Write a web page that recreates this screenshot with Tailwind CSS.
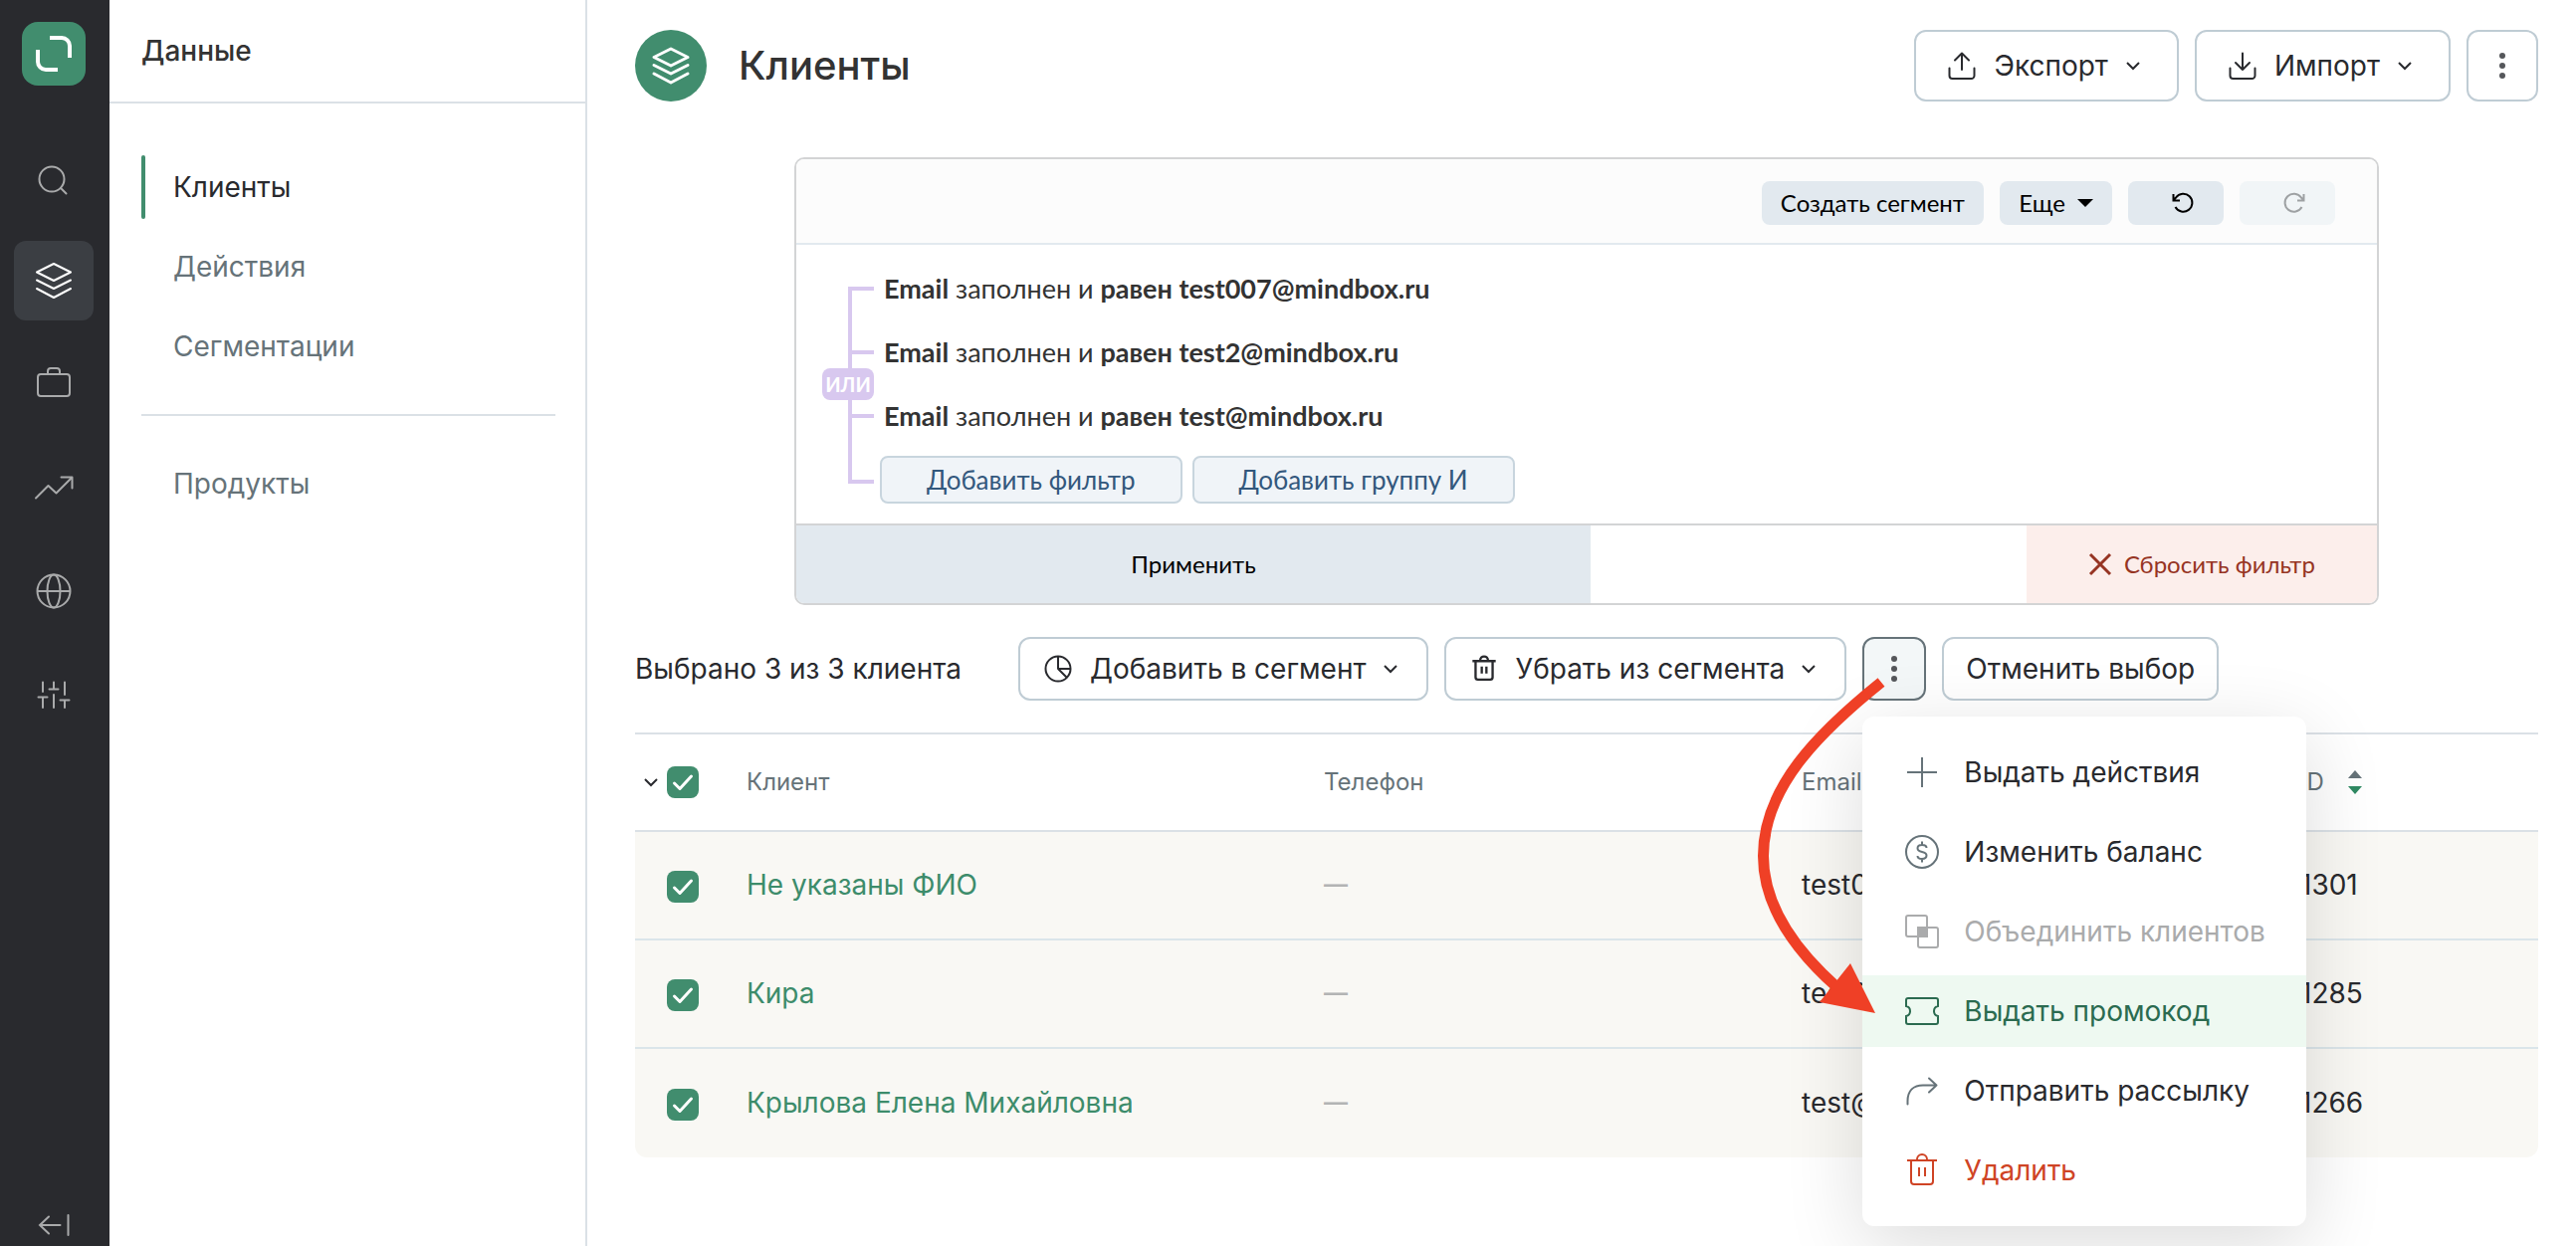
<!DOCTYPE html>
<html lang="ru">
<head>
<meta charset="utf-8">
<meta name="viewport" content="width=device-width, initial-scale=1">
<title>Клиенты</title>
<script src="https://cdn.jsdelivr.net/npm/@tailwindcss/browser@4"></script>
</head>
<body class="flex min-h-screen overflow-x-hidden bg-white font-['Inter',sans-serif] text-[28px] leading-9 text-[#292a2e]">

<!-- Shared icon shapes -->
<svg class="hidden" aria-hidden="true">
  <symbol id="layers" viewBox="0 0 40 40"><path d="M20 3 37 11.5 20 20 3 11.5zM3 19.5 20 28l17-8.5M3 28l17 9 17-9"/></symbol>
  <symbol id="chevron" viewBox="0 0 24 24"><path d="m6 9 6 6 6-6"/></symbol>
  <symbol id="trash" viewBox="0 0 36 36"><path d="M3 8h30M7 8v21a3 3 0 0 0 3 3h16a3 3 0 0 0 3-3V8M13 8V7a5 5 0 0 1 10 0v1M15 15v9M21 15v9"/></symbol>
  <symbol id="dots" viewBox="0 0 32 32"><circle cx="16" cy="6" r="3"/><circle cx="16" cy="16" r="3"/><circle cx="16" cy="26" r="3"/></symbol>
  <symbol id="check" viewBox="0 0 32 32"><path d="m7.500 17 5.500 5.500L24.500 10"/></symbol>
</svg>

<!-- Icon rail -->
<aside class="flex w-[110px] shrink-0 flex-col bg-[#292a2e] pl-[14px] pt-[22px]">
  <a href="#" aria-label="Mindbox" class="ml-2 block size-16 rounded-[16px] bg-[#418d6e]">
    <svg viewBox="0 0 64 64" class="size-16 fill-none stroke-white stroke-4"><path d="M28 16h12a8 8 0 0 1 8 8v12M16 28v12a8 8 0 0 0 8 8h12"/></svg>
  </a>
  <nav class="mt-[52px] flex flex-col gap-6 text-[#a9aaab]">
    <a href="#" aria-label="Поиск" class="flex size-20 items-center justify-center rounded-[12px]">
      <svg viewBox="0 0 40 40" class="size-10 fill-none stroke-current stroke-2" stroke-linecap="round"><circle cx="18" cy="22" r="12.500"/><path d="m27 31 5.500 5.500"/></svg>
    </a>
    <a href="#" aria-label="Данные" class="flex size-20 items-center justify-center rounded-[12px] bg-[#3b3e43] text-white">
      <svg class="size-10 fill-none stroke-current stroke-2" stroke-linejoin="round" stroke-linecap="round"><use href="#layers"/></svg>
    </a>
    <a href="#" aria-label="Кампании" class="flex size-20 items-center justify-center rounded-[12px]">
      <svg viewBox="0 0 40 40" class="size-10 fill-none stroke-current stroke-2"><rect x="4" y="10" width="32" height="22" rx="3"/><path d="M14 10V7a3 3 0 0 1 3-3h6a3 3 0 0 1 3 3v3"/></svg>
    </a>
    <a href="#" aria-label="Отчёты" class="flex size-20 items-center justify-center rounded-[12px]">
      <svg viewBox="0 0 40 40" class="size-10 fill-none stroke-current stroke-2" stroke-linecap="round" stroke-linejoin="round"><path d="M2 30.500 14.500 18l8 7.500L38 10M27.500 9.500h11v11"/></svg>
    </a>
    <a href="#" aria-label="Интеграции" class="flex size-20 items-center justify-center rounded-[12px]">
      <svg viewBox="0 0 40 40" class="size-10 fill-none stroke-current stroke-2"><circle cx="20" cy="20" r="16.500"/><ellipse cx="20" cy="20" rx="6.500" ry="16.500"/><path d="M3.500 20h33"/></svg>
    </a>
    <a href="#" aria-label="Настройки" class="flex size-20 items-center justify-center rounded-[12px]">
      <svg viewBox="0 0 40 40" class="size-10 fill-none stroke-current stroke-2" stroke-linecap="round"><path d="M9 7.500V17M4.500 22.500h9M9 22.500V33M20 7.500v7M15.500 14.500h9M20 20v13M31 7.500V20M26.500 25.500h9M31 25.500V33"/></svg>
    </a>
  </nav>
  <button type="button" aria-label="Свернуть" class="mt-auto ml-5 mb-px size-10 text-[#a9aaab]">
    <svg viewBox="0 0 40 40" class="size-10 fill-none stroke-current stroke-2" stroke-linecap="round"><path d="M6 20h20.500M15 11.500 6 20l9 8.500M34.500 10v20"/></svg>
  </button>
</aside>

<!-- Section menu -->
<aside class="w-[480px] shrink-0 border-r-2 border-[#dbe1e6]">
  <div class="flex h-[104px] items-center border-b-2 border-[#dbe1e6] pl-8">
    <h2 class="font-medium text-[#333]">Данные</h2>
  </div>
  <nav class="pl-8 pr-[30px] pt-[52px] text-[#667379]">
    <ul class="flex flex-col gap-4">
      <li><a href="#" class="relative flex h-16 items-center pl-8 text-[#292a2e]"><span class="absolute inset-y-0 left-0 w-1 rounded-full bg-[#418d6e]"></span>Клиенты</a></li>
      <li><a href="#" class="flex h-16 items-center pl-8">Действия</a></li>
      <li><a href="#" class="flex h-16 items-center pl-8">Сегментации</a></li>
    </ul>
    <hr class="my-9 border-t-2 border-[#dbe1e6]">
    <a href="#" class="flex h-16 items-center pl-8">Продукты</a>
  </nav>
</aside>

<main class="min-w-0 flex-1 pl-12 pr-[38px] pt-[30px]">
  <header class="flex items-center">
    <span class="grid size-[72px] place-items-center rounded-full bg-[#418d6e] text-white">
      <svg class="size-10 fill-none stroke-current stroke-3" stroke-linejoin="round" stroke-linecap="round"><use href="#layers"/></svg>
    </span>
    <h1 class="ml-8 text-[40px] leading-12 font-medium text-[#333]">Клиенты</h1>
    <div class="ml-auto flex gap-4">
      <button type="button" class="flex h-[72px] items-center rounded-[12px] border-2 border-[#bfccd4] px-8">
        <svg viewBox="0 0 28 28" class="size-7 fill-none stroke-current stroke-2" stroke-linecap="round" stroke-linejoin="round"><path d="M14 18V1.500M7 8.500l7-7 7 7M1.500 16.500V24a3 3 0 0 0 3 3h19a3 3 0 0 0 3-3v-7.500"/></svg>
        <span class="ml-[18px] mr-[13px]">Экспорт</span>
        <svg class="size-6 fill-none stroke-current stroke-2"><use href="#chevron"/></svg>
      </button>
      <button type="button" class="flex h-[72px] items-center rounded-[12px] border-2 border-[#bfccd4] px-8">
        <svg viewBox="0 0 28 28" class="size-7 fill-none stroke-current stroke-2" stroke-linecap="round" stroke-linejoin="round"><path d="M14 1.500V18M7 11l7 7 7-7M1.500 16.500V24a3 3 0 0 0 3 3h19a3 3 0 0 0 3-3v-7.500"/></svg>
        <span class="ml-[18px] mr-[13px]">Импорт</span>
        <svg class="size-6 fill-none stroke-current stroke-2"><use href="#chevron"/></svg>
      </button>
      <button type="button" aria-label="Ещё" class="grid size-[72px] place-items-center rounded-[12px] border-2 border-[#bfccd4]">
        <svg class="size-8 fill-[#55575b]"><use href="#dots"/></svg>
      </button>
    </div>
  </header>

  <!-- Filter builder -->
  <section class="mx-auto mt-14 max-w-[1592px] overflow-hidden rounded-[10px] border-2 border-[#d3d4d5] font-['Lato','Noto_Sans',sans-serif]">
    <div class="flex h-[86px] items-center justify-end gap-4 border-b-2 border-[#e2e9ef] bg-[#fcfcfc] pt-1 pr-[42px] text-2xl text-black">
      <button type="button" class="h-11 rounded-lg bg-[#e2e9ef] px-[19px]">Создать сегмент</button>
      <button type="button" class="flex h-11 w-[113px] items-center justify-center gap-3 rounded-lg bg-[#e2e9ef]">Еще
        <svg viewBox="0 0 16 8" class="h-2 w-4"><path d="M0 0h16L8 8z"/></svg>
      </button>
      <button type="button" aria-label="Отменить" class="flex h-11 w-24 items-center justify-center rounded-lg bg-[#e2e9ef] pl-[14px]">
        <svg viewBox="0 0 24 24" class="size-6 fill-none stroke-current stroke-2"><path d="M4.500 16a9 9 0 1 0 .6-9.500L2.500 9M2.500 3v6.500H9"/></svg>
      </button>
      <button type="button" aria-label="Повторить" disabled class="flex h-11 w-24 items-center justify-center rounded-lg bg-[#f1f5f7] pl-[14px] text-[#9ea1a3]">
        <svg viewBox="0 0 24 24" class="size-6 -scale-x-100 fill-none stroke-current stroke-2"><path d="M4.500 16a9 9 0 1 0 .6-9.500L2.500 9M2.500 3v6.500H9"/></svg>
      </button>
    </div>
    <div class="flex pb-5 pt-3">
      <div class="relative w-[84px] shrink-0">
        <svg viewBox="0 0 26 198" class="absolute left-[52px] top-[30px] h-[198px] w-[26px] fill-none stroke-[#d8c8ef] stroke-4"><path d="M26 2H2v194h24M2 66h24M2 130h24"/></svg>
        <span class="absolute left-[26px] top-28 grid h-8 w-[52px] place-items-center rounded-lg bg-[#d8c8ef] text-xl font-bold text-white">ИЛИ</span>
      </div>
      <div>
        <ul class="pl-1 text-[27px] text-[#333]">
          <li class="flex h-16 items-center"><p><b>Email</b> заполнен и <b>равен test007@mindbox.ru</b></p></li>
          <li class="flex h-16 items-center"><p><b>Email</b> заполнен и <b>равен test2@mindbox.ru</b></p></li>
          <li class="flex h-16 items-center"><p><b>Email</b> заполнен и <b>равен test@mindbox.ru</b></p></li>
        </ul>
        <div class="mt-2 flex gap-[10px] text-[26px] text-[#33587d]">
          <button type="button" class="h-12 rounded-lg border-2 border-[#c8d5de] bg-[#f0f4f8] px-[45px]">Добавить фильтр</button>
          <button type="button" class="h-12 rounded-lg border-2 border-[#c8d5de] bg-[#f0f4f8] px-[45px]">Добавить группу И</button>
        </div>
      </div>
    </div>
    <div class="flex h-20 justify-between border-t-2 border-[#d3d4d5] text-2xl">
      <button type="button" class="w-[798px] bg-[#e2e9ef] text-black">Применить</button>
      <button type="button" class="flex w-[352px] items-center justify-center gap-3 bg-[#fceeeb] text-[#963423]">
        <svg viewBox="0 0 24 24" class="size-6 fill-none stroke-current stroke-3"><path d="m2 2 20 20M22 2 2 22"/></svg>
        Сбросить фильтр
      </button>
    </div>
  </section>

  <!-- Bulk actions -->
  <div class="mt-8 flex items-center gap-4">
    <p class="mr-[41px] whitespace-nowrap">Выбрано 3 из 3 клиента</p>
    <button type="button" class="flex h-16 items-center rounded-[12px] border-2 border-[#bfccd4] px-6 whitespace-nowrap">
      <svg viewBox="0 0 28 28" class="size-7 fill-none stroke-current stroke-2" stroke-linejoin="round"><circle cx="14" cy="14" r="12.500"/><path d="M14 1.500V14h12.500M14 14l9 9"/></svg>
      <span class="ml-[18px] mr-3">Добавить в сегмент</span>
      <svg class="size-6 fill-none stroke-current stroke-2"><use href="#chevron"/></svg>
    </button>
    <button type="button" class="flex h-16 items-center rounded-[12px] border-2 border-[#bfccd4] px-6 whitespace-nowrap">
      <svg class="size-7 fill-none stroke-current stroke-3"><use href="#trash"/></svg>
      <span class="ml-[18px] mr-3">Убрать из сегмента</span>
      <svg class="size-6 fill-none stroke-current stroke-2"><use href="#chevron"/></svg>
    </button>

    <div class="relative">
      <button type="button" aria-label="Другие действия" aria-expanded="true" class="grid size-16 place-items-center rounded-[12px] border-2 border-[#667379] bg-[#f3f7f8]">
        <svg class="size-8 fill-[#55575b]"><use href="#dots"/></svg>
      </button>

      <!-- Open actions menu -->
      <ul class="absolute left-0 top-20 z-10 flex w-[446px] flex-col gap-2 rounded-[12px] bg-white py-5 whitespace-nowrap shadow-[0_20px_80px_rgba(0,0,0,0.14)]">
        <li><button type="button" class="flex h-[72px] w-full items-center gap-6 pl-[42px]">
          <svg viewBox="0 0 36 36" class="size-9 fill-none stroke-[#667379] stroke-2"><path d="M18 3v30M3 18h30"/></svg>Выдать действия</button></li>
        <li><button type="button" class="flex h-[72px] w-full items-center gap-6 pl-[42px]">
          <svg viewBox="0 0 36 36" class="size-9 fill-none stroke-[#667379] stroke-2"><circle cx="18" cy="18" r="16"/><path d="M22.500 14c0-2-2-3-4.500-3s-4.500 1-4.500 3.300S16 17.600 18 18s4.500 1.300 4.500 3.600S20.500 25 18 25s-4.500-1-4.500-3M18 7.500V11M18 25v3.500"/></svg>Изменить баланс</button></li>
        <li><button type="button" disabled class="flex h-[72px] w-full items-center gap-6 pl-[42px] text-[#aaabac]">
          <svg viewBox="0 0 36 36" class="size-9 fill-none stroke-current stroke-2"><rect x="2" y="2" width="21" height="21" rx="2"/><rect x="14" y="14" width="20" height="20" rx="2"/><path class="fill-current" d="M14 14h9v9h-9z"/></svg>Объединить клиентов</button></li>
        <li><button type="button" class="flex h-[72px] w-full items-center gap-6 bg-[#eef9f1] pl-[42px] text-[#2b6b50]">
          <svg viewBox="0 0 36 36" class="size-9 fill-none stroke-current stroke-2"><path d="M4 5h28a2 2 0 0 1 2 2v6c-3 .5-4 2.500-4 5s1 4.500 4 5v6a2 2 0 0 1-2 2H4a2 2 0 0 1-2-2v-6c3-.5 4-2.500 4-5s-1-4.500-4-5V7a2 2 0 0 1 2-2z"/></svg>Выдать промокод</button></li>
        <li><button type="button" class="flex h-[72px] w-full items-center gap-6 pl-[42px]">
          <svg viewBox="0 0 36 36" class="size-9 fill-none stroke-[#667379] stroke-2" stroke-linecap="round" stroke-linejoin="round"><path d="M3.500 31.500v-3C3.500 18 9.500 12.500 19 12.500h13.500M25 5.500l7.500 7-7.500 7"/></svg>Отправить рассылку</button></li>
        <li><button type="button" class="flex h-[72px] w-full items-center gap-6 pl-[42px] text-[#cf4425]">
          <svg class="size-9 fill-none stroke-current stroke-2"><use href="#trash"/></svg>Удалить</button></li>
      </ul>

      <!-- Pointer to the promo code item -->
      <svg viewBox="0 0 140 344" class="pointer-events-none absolute -left-28 top-10 z-20 h-[344px] w-[140px]" aria-hidden="true">
        <path class="fill-none stroke-[#ef4026] stroke-[11]" d="M131 5.500C67 57 12.500 112 12.500 180c0 50 30 93 74 132"/>
        <path class="fill-[#ef4026]" d="m125 338-25-50-31 39z"/>
      </svg>
    </div>

    <button type="button" class="h-16 rounded-[12px] border-2 border-[#bfccd4] px-[22px] whitespace-nowrap">Отменить выбор</button>
  </div>

  <table class="mt-8 w-full table-fixed border-separate border-spacing-0 text-left">
    <colgroup><col class="w-[112px]"><col class="w-[580px]"><col class="w-[480px]"><col class="w-[501px]"><col></colgroup>
    <thead class="text-2xl text-[#667379]">
      <tr class="*:h-[100px] *:border-y-2 *:border-[#dbe1e6] *:p-0 *:font-normal">
        <th><div class="flex items-center gap-1 pl-1">
          <svg class="size-6 fill-none stroke-[#292a2e] stroke-2"><use href="#chevron"/></svg>
          <span class="grid size-8"><input type="checkbox" checked aria-label="Выбрать всех" class="size-8 appearance-none rounded-lg bg-[#418d6e] [grid-area:1/1]"><svg class="pointer-events-none size-8 fill-none stroke-white stroke-3 [grid-area:1/1]" stroke-linecap="round" stroke-linejoin="round"><use href="#check"/></svg></span>
        </div></th>
        <th>Клиент</th>
        <th>Телефон</th>
        <th>Email</th>
        <th><div class="flex items-center gap-6">ID
          <svg viewBox="0 0 14 24" class="h-6 w-[14px]"><path class="fill-[#667379]" d="M0 8h14L7 0z"/><path class="fill-[#2f8a63]" d="M0 16h14l-7 8z"/></svg>
        </div></th>
      </tr>
    </thead>
    <tbody class="*:*:h-[109px] *:*:bg-[#f9f8f4] *:*:px-0 *:*:pt-0 *:*:pb-px">
      <tr class="*:border-b-2 *:border-[#dbe5ea]">
        <td><span class="mt-[3px] ml-8 grid size-8"><input type="checkbox" checked aria-label="Не указаны ФИО" class="size-8 appearance-none rounded-lg bg-[#418d6e] [grid-area:1/1]"><svg class="pointer-events-none size-8 fill-none stroke-white stroke-3 [grid-area:1/1]" stroke-linecap="round" stroke-linejoin="round"><use href="#check"/></svg></span></td>
        <td><a href="#" class="text-[#3d8c6b]">Не указаны ФИО</a></td>
        <td class="text-2xl font-semibold text-[#b3b4b4]">—</td>
        <td>test007@mindbox.ru</td>
        <td>1301</td>
      </tr>
      <tr class="*:border-b-2 *:border-[#dbe5ea]">
        <td><span class="mt-[3px] ml-8 grid size-8"><input type="checkbox" checked aria-label="Кира" class="size-8 appearance-none rounded-lg bg-[#418d6e] [grid-area:1/1]"><svg class="pointer-events-none size-8 fill-none stroke-white stroke-3 [grid-area:1/1]" stroke-linecap="round" stroke-linejoin="round"><use href="#check"/></svg></span></td>
        <td><a href="#" class="text-[#3d8c6b]">Кира</a></td>
        <td class="text-2xl font-semibold text-[#b3b4b4]">—</td>
        <td>test2@mindbox.ru</td>
        <td>1285</td>
      </tr>
      <tr>
        <td class="rounded-bl-[12px]"><span class="mt-[3px] ml-8 grid size-8"><input type="checkbox" checked aria-label="Крылова Елена Михайловна" class="size-8 appearance-none rounded-lg bg-[#418d6e] [grid-area:1/1]"><svg class="pointer-events-none size-8 fill-none stroke-white stroke-3 [grid-area:1/1]" stroke-linecap="round" stroke-linejoin="round"><use href="#check"/></svg></span></td>
        <td><a href="#" class="text-[#3d8c6b]">Крылова Елена Михайловна</a></td>
        <td class="text-2xl font-semibold text-[#b3b4b4]">—</td>
        <td>test@mindbox.ru</td>
        <td class="rounded-br-[12px]">1266</td>
      </tr>
    </tbody>
  </table>
</main>
</body>
</html>
